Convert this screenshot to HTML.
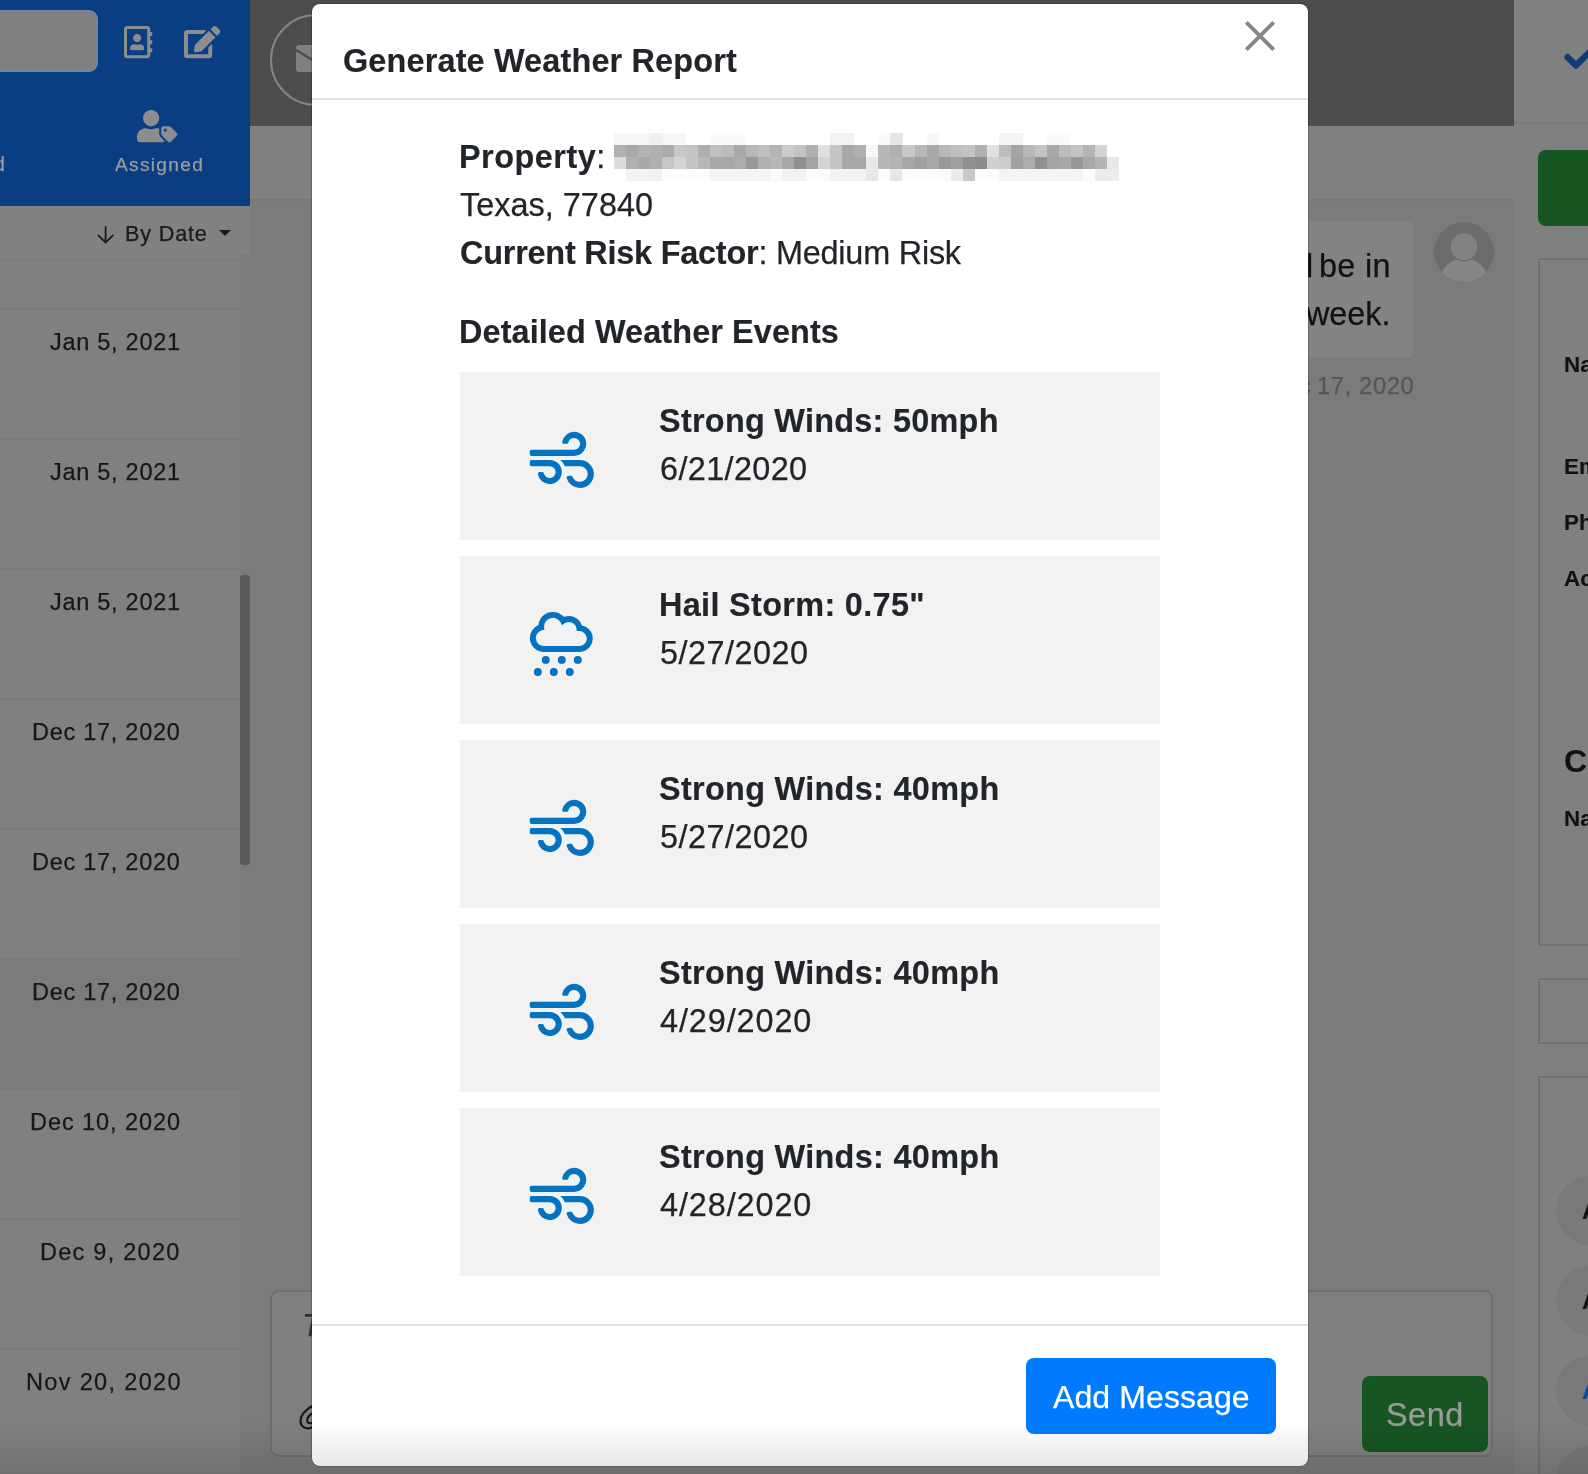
<!DOCTYPE html>
<html>
<head>
<meta charset="utf-8">
<title>Generate Weather Report</title>
<style>
*{box-sizing:border-box;margin:0;padding:0}
html,body{width:1588px;height:1474px;overflow:hidden}
body{position:relative;background:#7b7b7b;font-family:"Liberation Sans",sans-serif;color:#212529}
.abs{position:absolute}
.t{position:absolute;white-space:nowrap;line-height:1;will-change:transform;-webkit-text-stroke:.25px}
.t span{-webkit-text-stroke:.25px}
/* ---------- background app (dimmed) ---------- */
#bluehdr{left:0;top:0;width:250px;height:206px;background:#093e82}
#search{left:-10px;top:10px;width:108px;height:62px;background:#808080;border:2px solid #76859f;border-radius:9px}
#sortbar{left:0;top:206px;width:250px;height:48.5px;background:#818181}
#sortln{left:0;top:259px;width:240px;height:2px;background:#7c7c7c}
#list{left:0;top:262px;width:240px;height:1212px;background:#808080}
.row{position:absolute;left:0;width:240px;height:130px;border-top:2px solid #7b7b7b}
.row .t{left:40px;top:22px;font-size:23.5px;color:#171717;letter-spacing:.9px}
#sel{background:#7b7b7b}
#thumb{left:240px;top:575px;width:10px;height:290px;background:#595959;border-radius:3px}
#mainhdr{left:250px;top:0;width:1264px;height:126px;background:#4d4d4d}
#subhdr{left:250px;top:126px;width:1264px;height:75px;background:#808080;border-bottom:2px solid #777}
#right{left:1514px;top:0;width:74px;height:1474px;background:#808080}
#modal{left:312px;top:4px;width:996px;height:1462px;background:#fff;border-radius:8px;box-shadow:0 0 0 1px rgba(0,0,0,.2)}


/* ---------- left panel details ---------- */
.ico{position:absolute;overflow:visible}
#assigned{left:113.5px;top:155px;font-size:19.1px;color:#9c9c9c;letter-spacing:.75px}
#dleft{left:-6px;top:155px;font-size:19.6px;color:#9c9c9c}
#bydate{left:125px;top:224px;font-size:21.6px;color:#1a1a1a;letter-spacing:.85px}
#caret{left:219px;top:230px;width:0;height:0;border-left:6.5px solid transparent;border-right:6.5px solid transparent;border-top:6.5px solid #1a1a1a}
/* ---------- main area ---------- */
#avring{left:270px;top:13.5px;width:92.5px;height:92.5px;border-radius:50%;border:2px solid #858585}
#bubble{left:1100px;top:221.500px;width:313.500px;height:136px;background:#838383;border-radius:6px}
.chat{font-size:32.4px;color:#121212}
#stamp{font-size:23.8px;color:#565656;letter-spacing:.8px}
#uav{left:1434px;top:222px;width:60px;height:60px;border-radius:50%;background:#6c6c6c;overflow:hidden}
#msgbox{left:270px;top:1290px;width:1223px;height:167px;background:#808080;border:2px solid #6f6f6f;border-radius:9px}
#send{left:1362px;top:1376px;width:126px;height:76px;background:#175523;border-radius:8px}
#sendt{left:1388px;top:1398px;font-size:32.4px;color:#999b99}
#ph{left:302px;top:1309.5px;font-size:31.5px;font-style:italic;color:#303030}
/* ---------- right panel ---------- */
#rline{left:1514px;top:122px;width:74px;height:2px;background:#7a7a7a}
#gbtn{left:1538px;top:150px;width:60px;height:76px;background:#175523;border-radius:8px}
.rcard{position:absolute;left:1538px;width:60px;border:2px solid #717171;background:#808080}
.rl{-webkit-text-stroke:.15px;font-weight:bold;color:#121212;font-size:22.4px;left:1564px}
.chip{position:absolute;left:1556px;width:71px;height:71px;border-radius:50%;background:#797979}
/* ---------- modal ---------- */
#mhline{left:312px;top:98px;width:996px;height:2px;background:#dfe1e4}
#mfline{left:312px;top:1324px;width:996px;height:2px;background:#dfe1e4}
#title{left:343px;top:47px;font-size:32.4px;font-weight:bold;color:#212529;-webkit-text-stroke:.15px}
.b{font-size:32.4px;color:#212529}
.bb{font-size:32.4px;color:#212529;font-weight:bold;-webkit-text-stroke:.15px}
.card{position:absolute;left:460px;width:700px;height:168px;background:#f2f2f2}
.card .t{left:199px}
.card .h{top:33.4px}
.card .d{top:81.4px}
.card svg{position:absolute}
#addbtn{left:1026px;top:1358px;width:250px;height:76px;background:#007bff;border-radius:8px}
#addtxt{left:1052px;top:1381px;font-size:32px;color:#fff}
#botshade{left:0;top:1420px;width:1588px;height:54px;background:linear-gradient(to bottom,rgba(0,0,0,0),rgba(0,0,0,.11))}
</style>
</head>
<body>
<div class="abs" id="bluehdr"></div>
<div class="abs" id="search"></div>
<div class="abs" id="sortbar"></div>
<div class="abs" id="list" style="top:254px;height:1220px"><div class="row" style="top:53.5px"><div class="t" id="r0" style="left:50.2px;top:21.0px;letter-spacing:0.72px">Jan 5, 2021</div></div><div class="row" style="top:183.5px"><div class="t" id="r1" style="left:50.2px;top:21.0px;letter-spacing:0.72px">Jan 5, 2021</div></div><div class="row" style="top:313.5px"><div class="t" id="r2" style="left:50.2px;top:21.0px;letter-spacing:0.72px">Jan 5, 2021</div></div><div class="row" style="top:443.5px"><div class="t" id="r3" style="left:32.2px;top:21.0px;letter-spacing:0.73px">Dec 17, 2020</div></div><div class="row" style="top:573.5px"><div class="t" id="r4" style="left:32.2px;top:21.0px;letter-spacing:0.73px">Dec 17, 2020</div></div><div class="row" id="sel" style="top:703.5px"><div class="t" id="r5" style="left:32.2px;top:21.0px;letter-spacing:0.73px">Dec 17, 2020</div></div><div class="row" style="top:833.5px"><div class="t" id="r6" style="left:29.6px;top:21.0px;letter-spacing:0.94px">Dec 10, 2020</div></div><div class="row" style="top:963.5px"><div class="t" id="r7" style="left:39.8px;top:21.0px;letter-spacing:1.26px">Dec 9, 2020</div></div><div class="row" style="top:1093.5px"><div class="t" id="r8" style="left:25.6px;top:21.0px;letter-spacing:1.34px">Nov 20, 2020</div></div></div>
<div class="abs" id="sortln"></div><div class="abs" id="thumb"></div>
<svg class="ico" id="abook" style="left:123.9px;top:25.8px" width="28.26" height="32.30" viewBox="0 0 448 512"><path fill="#8d8d8d" d="M436 160c6.600 0 12-5.400 12-12v-40c0-6.600-5.400-12-12-12h-20V48c0-26.500-21.500-48-48-48H48C21.500 0 0 21.500 0 48v416c0 26.500 21.500 48 48 48h320c26.500 0 48-21.500 48-48v-48h20c6.600 0 12-5.400 12-12v-40c0-6.600-5.400-12-12-12h-20v-64h20c6.600 0 12-5.400 12-12v-40c0-6.600-5.400-12-12-12h-20v-64h20zm-68 304H48V48h320v416zM208 256c35.300 0 64-28.700 64-64s-28.700-64-64-64-64 28.700-64 64 28.700 64 64 64zm-89.600 128h179.200c12.400 0 22.400-8.600 22.400-19.200v-19.200c0-31.800-30.100-57.600-67.200-57.600-10.800 0-18.700 8-44.800 8-26.900 0-33.400-8-44.800-8-37.100 0-67.200 25.800-67.200 57.600v19.200c0 10.600 10 19.200 22.400 19.200z"/></svg>
<svg class="ico" id="edit" style="left:183.9px;top:25.6px" width="36.34" height="32.30" viewBox="0 0 576 512"><path fill="#8d8d8d" d="M402.600 83.200l90.200 90.200c3.800 3.800 3.800 10 0 13.800L274.400 405.600l-92.800 10.300c-12.400 1.400-22.900-9.100-21.500-21.500l10.300-92.800L388.800 83.200c3.800-3.800 10-3.800 13.800 0zm162-22.900l-48.800-48.800c-15.200-15.200-39.900-15.200-55.200 0l-35.400 35.400c-3.800 3.800-3.800 10 0 13.800l90.200 90.200c3.800 3.800 10 3.800 13.800 0l35.400-35.400c15.200-15.300 15.200-40 0-55.200zM384 346.200V448H64V128h229.800c3.200 0 6.200-1.300 8.500-3.500l40-40c7.600-7.600 2.200-20.500-8.500-20.500H48C21.500 64 0 85.500 0 112v352c0 26.500 21.500 48 48 48h352c26.500 0 48-21.500 48-48V306.200c0-10.700-12.900-16-20.500-8.500l-40 40c-2.200 2.300-3.500 5.300-3.500 8.500z"/></svg>
<svg class="ico" id="utag" style="left:137.2px;top:110.1px" width="40.38" height="32.30" viewBox="0 0 640 512"><path fill="#8d8d8d" d="M630.600 364.900l-90.300-90.200c-12-12-28.300-18.700-45.300-18.700h-79.300c-17.700 0-32 14.300-32 32v79.200c0 17 6.700 33.200 18.700 45.200l90.300 90.200c12.500 12.500 32.800 12.500 45.300 0l92.500-92.500c12.600-12.500 12.600-32.700.1-45.200zm-182.800-21c-13.300 0-24-10.700-24-24s10.700-24 24-24 24 10.700 24 24c0 13.200-10.700 24-24 24zm-223.800-88c70.700 0 128-57.300 128-128C352 57.300 294.700 0 224 0S96 57.300 96 128c0 70.600 57.300 127.900 128 127.900zm127.800 111.200V294c-12.200-3.600-24.900-6.200-38.200-6.200h-16.700c-22.200 10.200-46.900 16-72.900 16s-50.600-5.800-72.900-16h-16.700C60.200 287.900 0 348.100 0 422.300v41.600c0 26.500 21.500 48 48 48h352c15.500 0 29.100-7.500 37.900-18.900l-58-58c-18.100-18.100-28.100-42.200-28.100-67.900z"/></svg>
<div class="t" id="assigned" style="left:114.5px;top:155.0px;letter-spacing:1.32px">Assigned</div>
<div class="t" id="dleft">d</div>
<svg class="ico" id="darrow" style="left:96px;top:225px" width="20" height="20" viewBox="0 0 20 20"><path fill="none" stroke="#1a1a1a" stroke-width="1.800" d="M9.600 1.200v16.200M1.800 9.800l7.800 7.800 7.800-7.800"/></svg>
<div class="t" id="bydate" style="left:125.0px;top:223.0px;letter-spacing:0.84px">By Date</div>
<div class="abs" id="caret"></div>

<div class="abs" id="mainhdr"></div>
<div class="abs" id="subhdr"></div>

<div class="abs" id="avring"></div>
<svg class="ico" id="env" style="left:296px;top:45px" width="40" height="28" viewBox="0 0 40 28"><rect x="0" y="0" width="40" height="27" rx="3" fill="#808080"/><path d="M0 5l20 12L40 5" fill="none" stroke="#4d4d4d" stroke-width="2.400"/></svg>
<div class="abs" id="bubble"></div>
<div class="t chat" id="c1" style="left:1319.4px;top:250.4px;letter-spacing:0.30px">be in</div><div class="t chat" id="c1l" style="left:1305.5px;top:250.4px">l</div>
<div class="t chat" id="c2" style="left:1306.4px;top:298.2px;letter-spacing:-0.05px">week.</div>
<div class="t" id="stamp" style="left:1317.2px;top:374.0px;letter-spacing:0.59px">17, 2020</div>
<div class="t" id="stampc" style="left:1298.5px;top:374.0px;font-size:23.8px;color:#565656">c</div><div class="abs" id="uav"><svg width="60" height="60" viewBox="0 0 60 60"><ellipse cx="30" cy="61" rx="24.500" ry="25" fill="#868686"/><circle cx="30" cy="24.600" r="14.800" fill="#6c6c6c"/><circle cx="30" cy="24.600" r="13.300" fill="#828282"/></svg></div>
<div class="abs" id="msgbox"></div>
<div class="t" id="ph">Type a message...</div>
<svg class="ico" id="clip" style="left:296px;top:1402px" width="24" height="32" viewBox="0 0 24 32"><path fill="none" stroke="#151515" stroke-width="2.100" stroke-linecap="round" d="M17 3.500C10 7.500 4.500 12.500 4.500 19c0 5 4 8 9 7.200l4-1.200M17 11c-4 2-5.800 4.800-5.800 7.500 0 2.500 2.300 3.700 5.800 2"/></svg>
<div class="abs" id="send"></div>
<div class="t" id="sendt" style="left:1386.4px;top:1399.0px;letter-spacing:0.52px">Send</div>
<div class="abs" id="right"></div>
<div class="abs" id="rline"></div>
<svg class="ico" id="chk" style="left:1562px;top:46px" width="30" height="28" viewBox="0 0 30 28"><path fill="none" stroke="#0d3b76" stroke-width="6.300" stroke-linejoin="round" stroke-linecap="round" d="M5.600 11.200l8.400 8.400L32 1.600"/></svg>
<div class="abs" id="gbtn"></div>
<div class="rcard" style="top:258px;height:688px"></div>
<div class="rcard" style="top:978px;height:66px"></div>
<div class="rcard" style="top:1076px;height:420px"></div>
<div class="t rl" id="rl1" style="top:354.0px;left:1564.0px;letter-spacing:0.00px">Na</div>
<div class="t rl" id="rl2" style="top:456.0px;left:1564.0px;letter-spacing:0.00px">Em</div>
<div class="t rl" id="rl3" style="top:512.0px;left:1564.0px;letter-spacing:0.00px">Ph</div>
<div class="t rl" id="rl4" style="top:568.0px;left:1564.0px;letter-spacing:0.00px">Ac</div>
<div class="t rl" id="rl5" style="top:744.8px;font-size:32px;left:1564.0px;letter-spacing:0.00px">C</div>
<div class="t rl" id="rl6" style="top:808.0px;left:1564.0px;letter-spacing:0.00px">Na</div>
<div class="chip" style="top:1175px"></div><div class="chip" style="top:1265px"></div><div class="chip" style="top:1355px"></div><div class="chip" style="top:1445px"></div>
<div class="t rl" id="ca1" style="left:1582px;top:1198px;font-size:25px">A</div>
<div class="t rl" id="ca2" style="left:1582px;top:1288px;font-size:25px">A</div>
<div class="t rl" id="ca3" style="left:1582px;top:1378px;font-size:25px;color:#0c479a">A</div>

<div class="abs" id="modal"></div>
<div class="abs" id="mhline"></div>
<div class="t" id="title" style="left:342.6px;top:44.6px;letter-spacing:0.17px">Generate Weather Report</div>
<svg class="ico" id="pix" style="left:613.6px;top:133px" width="505" height="48" viewBox="0 0 505 48" shape-rendering="crispEdges"><rect x="0.00" y="0" width="12.07" height="12.05" fill="#f6f6f9"/><rect x="12.02" y="0" width="12.07" height="12.05" fill="#f6f6f9"/><rect x="24.04" y="0" width="12.07" height="12.05" fill="#f6f6f9"/><rect x="36.06" y="0" width="12.07" height="12.05" fill="#f0f0f3"/><rect x="48.08" y="0" width="12.07" height="12.05" fill="#f6f6f9"/><rect x="60.10" y="0" width="12.07" height="12.05" fill="#f6f6f9"/><rect x="96.16" y="0" width="12.07" height="12.05" fill="#fafafd"/><rect x="108.18" y="0" width="12.07" height="12.05" fill="#fafafd"/><rect x="120.20" y="0" width="12.07" height="12.05" fill="#fafafd"/><rect x="216.36" y="0" width="12.07" height="12.05" fill="#f2f2f5"/><rect x="228.38" y="0" width="12.07" height="12.05" fill="#f2f2f5"/><rect x="264.44" y="0" width="12.07" height="12.05" fill="#fafafd"/><rect x="276.46" y="0" width="12.07" height="12.05" fill="#e6e6e9"/><rect x="312.52" y="0" width="12.07" height="12.05" fill="#f8f8fb"/><rect x="384.64" y="0" width="12.07" height="12.05" fill="#f4f4f7"/><rect x="396.66" y="0" width="12.07" height="12.05" fill="#f4f4f7"/><rect x="432.72" y="0" width="12.07" height="12.05" fill="#fafafd"/><rect x="444.74" y="0" width="12.07" height="12.05" fill="#fafafd"/><rect x="0.00" y="12" width="12.07" height="12.05" fill="#b0b0b3"/><rect x="12.02" y="12" width="12.07" height="12.05" fill="#a8a8ab"/><rect x="24.04" y="12" width="12.07" height="12.05" fill="#b2b2b5"/><rect x="36.06" y="12" width="12.07" height="12.05" fill="#b0b0b3"/><rect x="48.08" y="12" width="12.07" height="12.05" fill="#ababae"/><rect x="60.10" y="12" width="12.07" height="12.05" fill="#c8c8cb"/><rect x="72.12" y="12" width="12.07" height="12.05" fill="#c4c4c7"/><rect x="84.14" y="12" width="12.07" height="12.05" fill="#aeaeb1"/><rect x="96.16" y="12" width="12.07" height="12.05" fill="#c0c0c3"/><rect x="108.18" y="12" width="12.07" height="12.05" fill="#bcbcbf"/><rect x="120.20" y="12" width="12.07" height="12.05" fill="#a8a8ab"/><rect x="132.22" y="12" width="12.07" height="12.05" fill="#b8b8bb"/><rect x="144.24" y="12" width="12.07" height="12.05" fill="#c0c0c3"/><rect x="156.26" y="12" width="12.07" height="12.05" fill="#b4b4b7"/><rect x="168.28" y="12" width="12.07" height="12.05" fill="#cccccf"/><rect x="180.30" y="12" width="12.07" height="12.05" fill="#c4c4c7"/><rect x="192.32" y="12" width="12.07" height="12.05" fill="#b0b0b3"/><rect x="204.34" y="12" width="12.07" height="12.05" fill="#e0e0e3"/><rect x="216.36" y="12" width="12.07" height="12.05" fill="#c4c4c7"/><rect x="228.38" y="12" width="12.07" height="12.05" fill="#a8a8ab"/><rect x="240.40" y="12" width="12.07" height="12.05" fill="#b0b0b3"/><rect x="252.42" y="12" width="12.07" height="12.05" fill="#f8f8fb"/><rect x="264.44" y="12" width="12.07" height="12.05" fill="#b8b8bb"/><rect x="276.46" y="12" width="12.07" height="12.05" fill="#b0b0b3"/><rect x="288.48" y="12" width="12.07" height="12.05" fill="#c8c8cb"/><rect x="300.50" y="12" width="12.07" height="12.05" fill="#b8b8bb"/><rect x="312.52" y="12" width="12.07" height="12.05" fill="#a8a8ab"/><rect x="324.54" y="12" width="12.07" height="12.05" fill="#b8b8bb"/><rect x="336.56" y="12" width="12.07" height="12.05" fill="#c0c0c3"/><rect x="348.58" y="12" width="12.07" height="12.05" fill="#c4c4c7"/><rect x="360.60" y="12" width="12.07" height="12.05" fill="#b0b0b3"/><rect x="372.62" y="12" width="12.07" height="12.05" fill="#e0e0e3"/><rect x="384.64" y="12" width="12.07" height="12.05" fill="#bcbcbf"/><rect x="396.66" y="12" width="12.07" height="12.05" fill="#a4a4a7"/><rect x="408.68" y="12" width="12.07" height="12.05" fill="#b8b8bb"/><rect x="420.70" y="12" width="12.07" height="12.05" fill="#c4c4c7"/><rect x="432.72" y="12" width="12.07" height="12.05" fill="#a8a8ab"/><rect x="444.74" y="12" width="12.07" height="12.05" fill="#bcbcbf"/><rect x="456.76" y="12" width="12.07" height="12.05" fill="#c4c4c7"/><rect x="468.78" y="12" width="12.07" height="12.05" fill="#b4b4b7"/><rect x="480.80" y="12" width="12.07" height="12.05" fill="#d4d4d7"/><rect x="0.00" y="24" width="12.07" height="12.05" fill="#dcdcdf"/><rect x="12.02" y="24" width="12.07" height="12.05" fill="#b0b0b3"/><rect x="24.04" y="24" width="12.07" height="12.05" fill="#a8a8ab"/><rect x="36.06" y="24" width="12.07" height="12.05" fill="#b0b0b3"/><rect x="48.08" y="24" width="12.07" height="12.05" fill="#c8c8cb"/><rect x="60.10" y="24" width="12.07" height="12.05" fill="#d4d4d7"/><rect x="72.12" y="24" width="12.07" height="12.05" fill="#c4c4c7"/><rect x="84.14" y="24" width="12.07" height="12.05" fill="#b8b8bb"/><rect x="96.16" y="24" width="12.07" height="12.05" fill="#a8a8ab"/><rect x="108.18" y="24" width="12.07" height="12.05" fill="#a8a8ab"/><rect x="120.20" y="24" width="12.07" height="12.05" fill="#acacaf"/><rect x="132.22" y="24" width="12.07" height="12.05" fill="#98989b"/><rect x="144.24" y="24" width="12.07" height="12.05" fill="#b0b0b3"/><rect x="156.26" y="24" width="12.07" height="12.05" fill="#b8b8bb"/><rect x="168.28" y="24" width="12.07" height="12.05" fill="#a8a8ab"/><rect x="180.30" y="24" width="12.07" height="12.05" fill="#909093"/><rect x="192.32" y="24" width="12.07" height="12.05" fill="#a4a4a7"/><rect x="204.34" y="24" width="12.07" height="12.05" fill="#d4d4d7"/><rect x="216.36" y="24" width="12.07" height="12.05" fill="#c4c4c7"/><rect x="228.38" y="24" width="12.07" height="12.05" fill="#a8a8ab"/><rect x="240.40" y="24" width="12.07" height="12.05" fill="#a8a8ab"/><rect x="252.42" y="24" width="12.07" height="12.05" fill="#e8e8eb"/><rect x="264.44" y="24" width="12.07" height="12.05" fill="#b8b8bb"/><rect x="276.46" y="24" width="12.07" height="12.05" fill="#b4b4b7"/><rect x="288.48" y="24" width="12.07" height="12.05" fill="#a8a8ab"/><rect x="300.50" y="24" width="12.07" height="12.05" fill="#a0a0a3"/><rect x="312.52" y="24" width="12.07" height="12.05" fill="#a8a8ab"/><rect x="324.54" y="24" width="12.07" height="12.05" fill="#98989b"/><rect x="336.56" y="24" width="12.07" height="12.05" fill="#a0a0a3"/><rect x="348.58" y="24" width="12.07" height="12.05" fill="#909093"/><rect x="360.60" y="24" width="12.07" height="12.05" fill="#8c8c8f"/><rect x="372.62" y="24" width="12.07" height="12.05" fill="#d0d0d3"/><rect x="384.64" y="24" width="12.07" height="12.05" fill="#cccccf"/><rect x="396.66" y="24" width="12.07" height="12.05" fill="#a0a0a3"/><rect x="408.68" y="24" width="12.07" height="12.05" fill="#acacaf"/><rect x="420.70" y="24" width="12.07" height="12.05" fill="#909093"/><rect x="432.72" y="24" width="12.07" height="12.05" fill="#a4a4a7"/><rect x="444.74" y="24" width="12.07" height="12.05" fill="#a8a8ab"/><rect x="456.76" y="24" width="12.07" height="12.05" fill="#98989b"/><rect x="468.78" y="24" width="12.07" height="12.05" fill="#a8a8ab"/><rect x="480.80" y="24" width="12.07" height="12.05" fill="#b4b4b7"/><rect x="492.82" y="24" width="12.07" height="12.05" fill="#e8e8eb"/><rect x="12.02" y="36" width="12.07" height="12.05" fill="#f3f3f6"/><rect x="24.04" y="36" width="12.07" height="12.05" fill="#f3f3f6"/><rect x="36.06" y="36" width="12.07" height="12.05" fill="#f0f0f3"/><rect x="48.08" y="36" width="12.07" height="12.05" fill="#fcfcff"/><rect x="60.10" y="36" width="12.07" height="12.05" fill="#fcfcff"/><rect x="72.12" y="36" width="12.07" height="12.05" fill="#fcfcff"/><rect x="84.14" y="36" width="12.07" height="12.05" fill="#fcfcff"/><rect x="96.16" y="36" width="12.07" height="12.05" fill="#f4f4f7"/><rect x="108.18" y="36" width="12.07" height="12.05" fill="#f4f4f7"/><rect x="120.20" y="36" width="12.07" height="12.05" fill="#f4f4f7"/><rect x="132.22" y="36" width="12.07" height="12.05" fill="#f4f4f7"/><rect x="144.24" y="36" width="12.07" height="12.05" fill="#f4f4f7"/><rect x="156.26" y="36" width="12.07" height="12.05" fill="#fbfbfe"/><rect x="168.28" y="36" width="12.07" height="12.05" fill="#f2f2f5"/><rect x="180.30" y="36" width="12.07" height="12.05" fill="#f2f2f5"/><rect x="192.32" y="36" width="12.07" height="12.05" fill="#fbfbfe"/><rect x="204.34" y="36" width="12.07" height="12.05" fill="#fbfbfe"/><rect x="216.36" y="36" width="12.07" height="12.05" fill="#f2f2f5"/><rect x="228.38" y="36" width="12.07" height="12.05" fill="#f2f2f5"/><rect x="240.40" y="36" width="12.07" height="12.05" fill="#f2f2f5"/><rect x="252.42" y="36" width="12.07" height="12.05" fill="#e8e8eb"/><rect x="264.44" y="36" width="12.07" height="12.05" fill="#fcfcff"/><rect x="276.46" y="36" width="12.07" height="12.05" fill="#e8e8eb"/><rect x="288.48" y="36" width="12.07" height="12.05" fill="#fbfbfe"/><rect x="300.50" y="36" width="12.07" height="12.05" fill="#fbfbfe"/><rect x="312.52" y="36" width="12.07" height="12.05" fill="#fbfbfe"/><rect x="324.54" y="36" width="12.07" height="12.05" fill="#fbfbfe"/><rect x="336.56" y="36" width="12.07" height="12.05" fill="#ececef"/><rect x="348.58" y="36" width="12.07" height="12.05" fill="#c8c8cb"/><rect x="360.60" y="36" width="12.07" height="12.05" fill="#fbfbfe"/><rect x="372.62" y="36" width="12.07" height="12.05" fill="#fbfbfe"/><rect x="384.64" y="36" width="12.07" height="12.05" fill="#f4f4f7"/><rect x="396.66" y="36" width="12.07" height="12.05" fill="#f4f4f7"/><rect x="408.68" y="36" width="12.07" height="12.05" fill="#f4f4f7"/><rect x="420.70" y="36" width="12.07" height="12.05" fill="#f4f4f7"/><rect x="432.72" y="36" width="12.07" height="12.05" fill="#f4f4f7"/><rect x="444.74" y="36" width="12.07" height="12.05" fill="#f4f4f7"/><rect x="456.76" y="36" width="12.07" height="12.05" fill="#f4f4f7"/><rect x="468.78" y="36" width="12.07" height="12.05" fill="#fcfcff"/><rect x="480.80" y="36" width="12.07" height="12.05" fill="#ececef"/><rect x="492.82" y="36" width="12.07" height="12.05" fill="#ececef"/></svg><svg class="ico" id="closex" style="left:1244px;top:20px" width="32" height="32" viewBox="0 0 32 32"><path fill="none" stroke="#878787" stroke-width="4" d="M2.300 2.300l27.400 27.400M29.700 2.300L2.300 29.700"/></svg><div class="t bb" id="l1" style="left:459.0px;top:141.0px;letter-spacing:0.50px">Property<span style="font-weight:normal">:</span></div>
<div class="t b" id="l2" style="left:460.0px;top:189.0px;letter-spacing:0.03px">Texas, 77840</div>
<div class="t bb" id="l3" style="left:460.0px;top:237.0px;letter-spacing:-0.21px">Current Risk Factor<span id="l3b" style="font-weight:normal">: Medium Risk</span></div>
<div class="t bb" id="l4" style="left:459.0px;top:316.0px;letter-spacing:0.11px">Detailed Weather Events</div>
<div class="card" style="top:372px"><svg class="ic" style="left:64px;top:54px" width="76" height="66" viewBox="0 0 76 66"><path fill="#0471c1" d="M7.64 29.91L50.13 29.91A12.08 12.08 0 0 0 50.13 5.75A12.08 12.08 0 0 0 38.2 15.94Q38.05 17.83 39.95 17.83L42.3 17.83Q44.2 17.83 44.5 15.96A5.93 5.93 0 0 1 50.13 11.9A5.93 5.93 0 0 1 50.13 23.76L7.64 23.76Q5.74 23.76 5.74 25.66L5.74 28.01Q5.74 29.91 7.64 29.91Z"/><path fill="#0471c1" d="M25.77 34.08L55.92 34.08A13.95 13.95 0 0 1 55.92 61.98A13.95 13.95 0 0 1 42.64 52.3Q42.18 50.45 44.05 50.12L46.37 49.71Q48.24 49.38 48.79 51.2A7.8 7.8 0 0 0 55.92 55.83A7.8 7.8 0 0 0 55.92 40.23L25.77 40.23Z"/><circle cx="25.77" cy="46.11" r="16.15" fill="#f2f2f2"/><path fill="#0471c1" d="M7.64 34.07L25.77 34.07A12.04 12.04 0 0 1 25.77 58.15A12.04 12.04 0 0 1 13.88 48Q13.73 46.11 15.63 46.11L17.98 46.11Q19.88 46.11 20.18 47.98A5.89 5.89 0 0 0 25.77 52A5.89 5.89 0 0 0 25.77 40.22L7.64 40.22Q5.74 40.22 5.74 38.32L5.74 35.97Q5.74 34.07 7.64 34.07Z"/></svg><div class="t bb h" id="h0" style="left:199.0px;top:33.4px;letter-spacing:0.28px">Strong Winds: 50mph</div><div class="t b d" id="d0" style="left:200.0px;top:81.4px;letter-spacing:0.37px">6/21/2020</div></div>
<div class="card" style="top:556px"><svg class="ic" style="left:64px;top:50px" width="76" height="76" viewBox="0 0 76 76"><path fill="none" stroke="#0471c1" stroke-width="5.95" stroke-linejoin="miter" d="M19.85 42.9A10.93 10.93 0 0 1 17.19 21.36A11.7 11.7 0 0 1 39.06 14.86A10.52 10.52 0 0 1 55.38 22.15A10.42 10.42 0 0 1 56.72 42.9Z"/><g fill="#0471c1"><circle cx="21.76" cy="53.88" r="3.95"/><circle cx="37.79" cy="53.88" r="3.95"/><circle cx="53.78" cy="53.88" r="3.95"/><circle cx="13.82" cy="66" r="3.95"/><circle cx="29.8" cy="66" r="3.95"/><circle cx="45.78" cy="66" r="3.95"/></g></svg><div class="t bb h" id="h1" style="left:199.0px;top:33.4px;letter-spacing:0.34px">Hail Storm: 0.75&quot;</div><div class="t b d" id="d1" style="left:200.0px;top:81.4px;letter-spacing:0.50px">5/27/2020</div></div>
<div class="card" style="top:740px"><svg class="ic" style="left:64px;top:54px" width="76" height="66" viewBox="0 0 76 66"><path fill="#0471c1" d="M7.64 29.91L50.13 29.91A12.08 12.08 0 0 0 50.13 5.75A12.08 12.08 0 0 0 38.2 15.94Q38.05 17.83 39.95 17.83L42.3 17.83Q44.2 17.83 44.5 15.96A5.93 5.93 0 0 1 50.13 11.9A5.93 5.93 0 0 1 50.13 23.76L7.64 23.76Q5.74 23.76 5.74 25.66L5.74 28.01Q5.74 29.91 7.64 29.91Z"/><path fill="#0471c1" d="M25.77 34.08L55.92 34.08A13.95 13.95 0 0 1 55.92 61.98A13.95 13.95 0 0 1 42.64 52.3Q42.18 50.45 44.05 50.12L46.37 49.71Q48.24 49.38 48.79 51.2A7.8 7.8 0 0 0 55.92 55.83A7.8 7.8 0 0 0 55.92 40.23L25.77 40.23Z"/><circle cx="25.77" cy="46.11" r="16.15" fill="#f2f2f2"/><path fill="#0471c1" d="M7.64 34.07L25.77 34.07A12.04 12.04 0 0 1 25.77 58.15A12.04 12.04 0 0 1 13.88 48Q13.73 46.11 15.63 46.11L17.98 46.11Q19.88 46.11 20.18 47.98A5.89 5.89 0 0 0 25.77 52A5.89 5.89 0 0 0 25.77 40.22L7.64 40.22Q5.74 40.22 5.74 38.32L5.74 35.97Q5.74 34.07 7.64 34.07Z"/></svg><div class="t bb h" id="h2" style="left:199.0px;top:33.4px;letter-spacing:0.32px">Strong Winds: 40mph</div><div class="t b d" id="d2" style="left:200.0px;top:81.4px;letter-spacing:0.50px">5/27/2020</div></div>
<div class="card" style="top:924px"><svg class="ic" style="left:64px;top:54px" width="76" height="66" viewBox="0 0 76 66"><path fill="#0471c1" d="M7.64 29.91L50.13 29.91A12.08 12.08 0 0 0 50.13 5.75A12.08 12.08 0 0 0 38.2 15.94Q38.05 17.83 39.95 17.83L42.3 17.83Q44.2 17.83 44.5 15.96A5.93 5.93 0 0 1 50.13 11.9A5.93 5.93 0 0 1 50.13 23.76L7.64 23.76Q5.74 23.76 5.74 25.66L5.74 28.01Q5.74 29.91 7.64 29.91Z"/><path fill="#0471c1" d="M25.77 34.08L55.92 34.08A13.95 13.95 0 0 1 55.92 61.98A13.95 13.95 0 0 1 42.64 52.3Q42.18 50.45 44.05 50.12L46.37 49.71Q48.24 49.38 48.79 51.2A7.8 7.8 0 0 0 55.92 55.83A7.8 7.8 0 0 0 55.92 40.23L25.77 40.23Z"/><circle cx="25.77" cy="46.11" r="16.15" fill="#f2f2f2"/><path fill="#0471c1" d="M7.64 34.07L25.77 34.07A12.04 12.04 0 0 1 25.77 58.15A12.04 12.04 0 0 1 13.88 48Q13.73 46.11 15.63 46.11L17.98 46.11Q19.88 46.11 20.18 47.98A5.89 5.89 0 0 0 25.77 52A5.89 5.89 0 0 0 25.77 40.22L7.64 40.22Q5.74 40.22 5.74 38.32L5.74 35.97Q5.74 34.07 7.64 34.07Z"/></svg><div class="t bb h" id="h3" style="left:199.0px;top:33.4px;letter-spacing:0.32px">Strong Winds: 40mph</div><div class="t b d" id="d3" style="left:200.0px;top:81.4px;letter-spacing:0.91px">4/29/2020</div></div>
<div class="card" style="top:1108px"><svg class="ic" style="left:64px;top:54px" width="76" height="66" viewBox="0 0 76 66"><path fill="#0471c1" d="M7.64 29.91L50.13 29.91A12.08 12.08 0 0 0 50.13 5.75A12.08 12.08 0 0 0 38.2 15.94Q38.05 17.83 39.95 17.83L42.3 17.83Q44.2 17.83 44.5 15.96A5.93 5.93 0 0 1 50.13 11.9A5.93 5.93 0 0 1 50.13 23.76L7.64 23.76Q5.74 23.76 5.74 25.66L5.74 28.01Q5.74 29.91 7.64 29.91Z"/><path fill="#0471c1" d="M25.77 34.08L55.92 34.08A13.95 13.95 0 0 1 55.92 61.98A13.95 13.95 0 0 1 42.64 52.3Q42.18 50.45 44.05 50.12L46.37 49.71Q48.24 49.38 48.79 51.2A7.8 7.8 0 0 0 55.92 55.83A7.8 7.8 0 0 0 55.92 40.23L25.77 40.23Z"/><circle cx="25.77" cy="46.11" r="16.15" fill="#f2f2f2"/><path fill="#0471c1" d="M7.64 34.07L25.77 34.07A12.04 12.04 0 0 1 25.77 58.15A12.04 12.04 0 0 1 13.88 48Q13.73 46.11 15.63 46.11L17.98 46.11Q19.88 46.11 20.18 47.98A5.89 5.89 0 0 0 25.77 52A5.89 5.89 0 0 0 25.77 40.22L7.64 40.22Q5.74 40.22 5.74 38.32L5.74 35.97Q5.74 34.07 7.64 34.07Z"/></svg><div class="t bb h" id="h4" style="left:199.0px;top:33.4px;letter-spacing:0.32px">Strong Winds: 40mph</div><div class="t b d" id="d4" style="left:200.0px;top:81.4px;letter-spacing:0.91px">4/28/2020</div></div>

<div class="abs" id="mfline"></div>
<div class="abs" id="addbtn"></div>
<div class="t" id="addtxt" style="left:1053.0px;top:1381.0px;letter-spacing:0.10px">Add Message</div>
<div class="abs" id="botshade"></div>

</body>
</html>
